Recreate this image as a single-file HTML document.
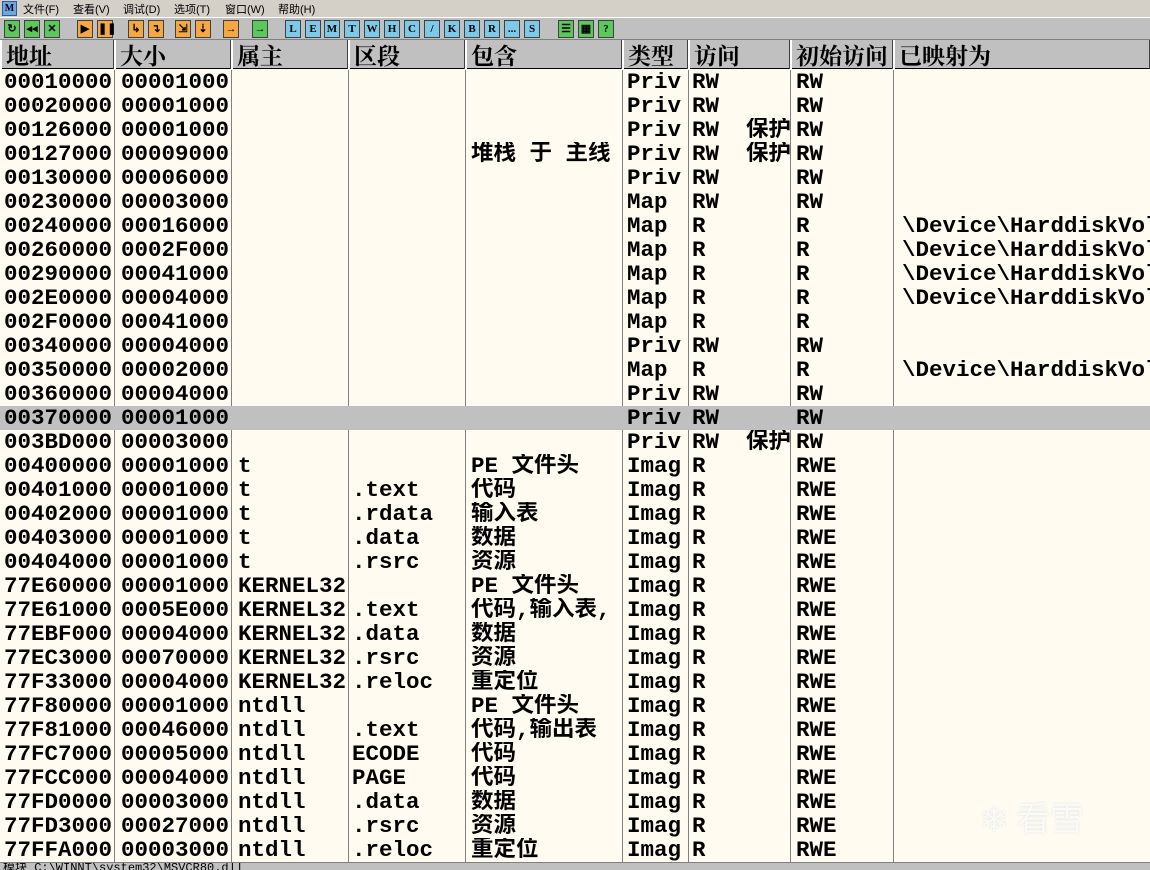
<!DOCTYPE html>
<html><head><meta charset="utf-8"><style>
*{margin:0;padding:0;box-sizing:border-box}
body{width:1150px;height:870px;overflow:hidden;background:#fffbf0;position:relative;font-family:"Liberation Mono","Noto Sans CJK SC",monospace}
#menu{position:absolute;left:0;top:0;width:1150px;height:17px;background:#d4d0c8;font:11px "Liberation Sans","Noto Sans CJK SC",sans-serif;color:#000}
#menu span{position:absolute;top:1px}
#logo{position:absolute;left:2px;top:1px;width:15px;height:15px;background:#6fa8dc;border:1px solid #2a5c9a;color:#003;font:bold 10px "Liberation Serif",serif;text-align:center;line-height:13px}
#tb{position:absolute;left:0;top:17px;width:1150px;height:23px;background:#c0c0c0;border-top:1px solid #fff;border-bottom:1px solid #808080}
.b{position:absolute;top:2px;width:16px;height:18px;border:1px solid #404040;font:bold 11px "Liberation Serif",serif;text-align:center;line-height:16px;color:#000}
.g{background:#5cc85c}.o{background:#f5a742}.l{background:#7ec8e8}
#hdr{position:absolute;left:0;top:40px;width:1150px;height:29px;background:#c0c0c0;border-bottom:1px solid #000}
.h{position:absolute;top:0;height:29px;border-left:2px solid #fff;border-right:1px solid #404040;font-size:23px;font-weight:bold;line-height:29px;color:#000;font-family:"Noto Serif CJK SC","Noto Sans CJK SC",serif;padding-left:4px;white-space:nowrap;overflow:hidden}
#rows{position:absolute;left:0;top:70px;width:1150px}
.r{position:relative;height:24px;font-size:22.5px;font-weight:bold;line-height:24px;color:#000;white-space:pre}
.r.sel{background:#c0c0c0}
.r span{position:absolute;top:0;overflow:hidden;height:24px}
.vl{position:absolute;top:70px;height:792px;width:1px;background:#808080}
#st{position:absolute;left:0;top:862px;width:1150px;height:8px;background:#c0c0c0;border-top:1px solid #808080;font:12px "Liberation Mono","Noto Sans CJK SC",monospace;line-height:10px;overflow:hidden;color:#000;padding-left:3px}
#wm{position:absolute;left:980px;top:792px;color:rgba(255,255,255,.8);font:34px "Noto Sans CJK SC",sans-serif;text-shadow:0 0 2px #ddd}
</style></head><body>
<div id="menu"><div id="logo">M</div>
<span style="left:23px">文件(F)</span><span style="left:73px">查看(V)</span><span style="left:123px">调试(D)</span><span style="left:174px">选项(T)</span><span style="left:225px">窗口(W)</span><span style="left:278px">帮助(H)</span></div>
<div id="tb">
<div class="b g" style="left:4px">↻</div><div class="b g" style="left:24px">◂◂</div><div class="b g" style="left:44px">✕</div>
<div class="b o" style="left:77px">▶</div><div class="b o" style="left:97px">❚❚</div>
<div class="b o" style="left:128px">↳</div><div class="b o" style="left:148px">↴</div>
<div class="b o" style="left:175px">⇲</div><div class="b o" style="left:195px">⇣</div>
<div class="b o" style="left:223px">→</div><div class="b g" style="left:252px">→</div>
<div class="b l" style="left:285px">L</div><div class="b l" style="left:305px">E</div><div class="b l" style="left:324px">M</div><div class="b l" style="left:344px">T</div><div class="b l" style="left:364px">W</div><div class="b l" style="left:384px">H</div><div class="b l" style="left:404px">C</div><div class="b l" style="left:424px">/</div><div class="b l" style="left:444px">K</div><div class="b l" style="left:464px">B</div><div class="b l" style="left:484px">R</div><div class="b l" style="left:504px">...</div><div class="b l" style="left:524px">S</div>
<div class="b g" style="left:558px">☰</div><div class="b g" style="left:578px">▦</div><div class="b g" style="left:598px">?</div>
</div>
<div id="hdr">
<div class="h" style="left:0;width:114px">地址</div><div class="h" style="left:114px;width:117px">大小</div><div class="h" style="left:231px;width:117px">属主</div><div class="h" style="left:348px;width:117px">区段</div><div class="h" style="left:465px;width:157px">包含</div><div class="h" style="left:622px;width:66px">类型</div><div class="h" style="left:688px;width:102px">访问</div><div class="h" style="left:790px;width:103px">初始访问</div><div class="h" style="left:893px;width:257px">已映射为</div>
</div>
<div class="vl" style="left:114px"></div><div class="vl" style="left:231px"></div><div class="vl" style="left:348px"></div><div class="vl" style="left:465px"></div><div class="vl" style="left:622px"></div><div class="vl" style="left:688px"></div><div class="vl" style="left:790px"></div><div class="vl" style="left:893px"></div>
<div id="rows"></div>
<div id="st">模块 C:\WINNT\system32\MSVCR80.dll</div>
<div id="wm">❄ 看雪</div>
<script>
var P="RW  保护";
var D=[
["00010000","00001000","","","","Priv","RW","RW",""],
["00020000","00001000","","","","Priv","RW","RW",""],
["00126000","00001000","","","","Priv",P,"RW",""],
["00127000","00009000","","","堆栈 于 主线","Priv",P,"RW",""],
["00130000","00006000","","","","Priv","RW","RW",""],
["00230000","00003000","","","","Map","RW","RW",""],
["00240000","00016000","","","","Map","R","R","\\Device\\HarddiskVol"],
["00260000","0002F000","","","","Map","R","R","\\Device\\HarddiskVol"],
["00290000","00041000","","","","Map","R","R","\\Device\\HarddiskVol"],
["002E0000","00004000","","","","Map","R","R","\\Device\\HarddiskVol"],
["002F0000","00041000","","","","Map","R","R",""],
["00340000","00004000","","","","Priv","RW","RW",""],
["00350000","00002000","","","","Map","R","R","\\Device\\HarddiskVol"],
["00360000","00004000","","","","Priv","RW","RW",""],
["00370000","00001000","","","","Priv","RW","RW",""],
["003BD000","00003000","","","","Priv",P,"RW",""],
["00400000","00001000","t","","PE 文件头","Imag","R","RWE",""],
["00401000","00001000","t",".text","代码","Imag","R","RWE",""],
["00402000","00001000","t",".rdata","输入表","Imag","R","RWE",""],
["00403000","00001000","t",".data","数据","Imag","R","RWE",""],
["00404000","00001000","t",".rsrc","资源","Imag","R","RWE",""],
["77E60000","00001000","KERNEL32","","PE 文件头","Imag","R","RWE",""],
["77E61000","0005E000","KERNEL32",".text","代码,输入表,","Imag","R","RWE",""],
["77EBF000","00004000","KERNEL32",".data","数据","Imag","R","RWE",""],
["77EC3000","00070000","KERNEL32",".rsrc","资源","Imag","R","RWE",""],
["77F33000","00004000","KERNEL32",".reloc","重定位","Imag","R","RWE",""],
["77F80000","00001000","ntdll","","PE 文件头","Imag","R","RWE",""],
["77F81000","00046000","ntdll",".text","代码,输出表","Imag","R","RWE",""],
["77FC7000","00005000","ntdll","ECODE","代码","Imag","R","RWE",""],
["77FCC000","00004000","ntdll","PAGE","代码","Imag","R","RWE",""],
["77FD0000","00003000","ntdll",".data","数据","Imag","R","RWE",""],
["77FD3000","00027000","ntdll",".rsrc","资源","Imag","R","RWE",""],
["77FFA000","00003000","ntdll",".reloc","重定位","Imag","R","RWE",""]];
var L=[4,121,238,352,471,627,692,796,902],W=[110,110,110,113,151,61,98,97,248];
var h="";
D.forEach(function(r,i){h+='<div class="r'+(i==14?' sel':'')+'">';r.forEach(function(c,j){h+='<span style="left:'+L[j]+'px;width:'+W[j]+'px">'+c+'</span>'});h+='</div>'});
document.getElementById("rows").innerHTML=h;
</script>
</body></html>
